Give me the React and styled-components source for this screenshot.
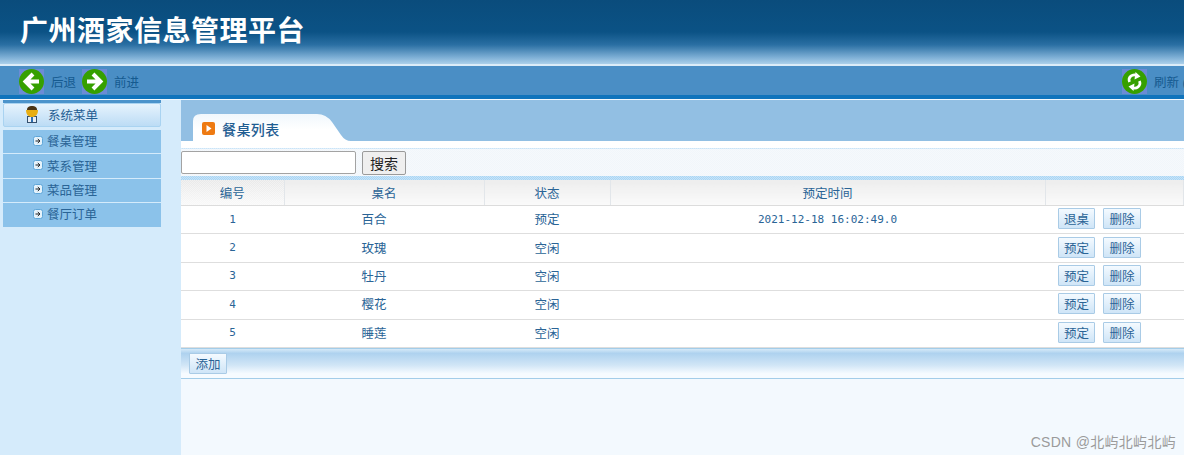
import styled, { createGlobalStyle } from "styled-components";

const GlobalStyle = createGlobalStyle`
  html, body { margin: 0; padding: 0; background: #f3f9fe; }
  body { font-family: "Liberation Sans", "Noto Sans CJK SC", sans-serif; }
`;

const dots = "repeating-conic-gradient(rgba(255,255,255,0.35) 0 25%, transparent 0 50%) 0 0 / 2px 2px";

const Page = styled.div`
  width: 1184px;
  height: 455px;
  overflow: hidden;
  position: relative;
  display: flex;
  flex-direction: column;
  color: #2a6496;
  font-size: 12.5px;
`;

const Banner = styled.header`
  height: 64px;
  flex: none;
  box-sizing: border-box;
  padding: 10px 0 0 20px;
  background: linear-gradient(#0a4c7c 0, #0b5285 50%, #2a6fa3 70%, #7fb0d6 90%, #acd0ea 100%);
`;

const Title = styled.h1`
  margin: 0;
  color: #fff;
  font: bold 28px/38px "Noto Sans CJK SC", sans-serif;
  letter-spacing: 0.5px;
`;

const ToolBar = styled.div`
  flex: none;
  height: 28px;
  padding: 1px 0 0 19px;
  border-top: 2px solid #dcecf8;
  border-bottom: 4px solid #1074bc;
  display: flex;
  align-items: center;
  background: #4a8ec5;
  color: #155a90;
`;

const ToolItem = styled.div`
  display: flex;
  align-items: center;
  gap: 7px;
  width: 63px;
  white-space: nowrap;
  &:last-child { margin-left: auto; width: 62px; }
`;

const ToolIcon = styled.svg`
  width: 25px;
  height: 25px;
  flex: none;
  background: #6c8bd6;
`;

const Body = styled.div`
  flex: 1;
  min-height: 0;
  display: grid;
  grid-template-columns: 181px 1fr;
  margin-top: 1px;
`;

const Sidebar = styled.aside`
  background: #d5ebfb;
  padding-left: 3px;
`;

const Menu = styled.nav`
  width: 158px;
  display: flex;
  flex-direction: column;
  gap: 1px;
  border-top: 3px solid #4b93cb;
`;

const MenuHead = styled.div`
  box-sizing: border-box;
  height: 24px;
  margin-bottom: 2px;
  padding: 0 0 1px 21px;
  display: flex;
  align-items: center;
  gap: 9px;
  border: 1px solid #a9d3f1;
  border-radius: 2px;
  background: linear-gradient(#e6f3fd, #bcdcf5);
  color: #1f5d92;
`;

const MenuItem = styled.a`
  box-sizing: border-box;
  height: 23.4px;
  padding: 0 0 2px 30px;
  display: flex;
  align-items: center;
  gap: 4px;
  background: #8bc2ea;
  color: #2a6496;
`;

const Content = styled.main`
  min-width: 0;
  background: #f3f9fe;
`;

const TabStrip = styled.div`
  height: 41px;
  background: #92bfe3;
  display: flex;
  align-items: flex-end;
  padding-left: 12px;
`;

const Tab = styled.div`
  width: 158px;
  height: 28px;
  box-sizing: border-box;
  display: flex;
  align-items: center;
  gap: 7px;
  padding: 3px 0 0 9px;
  background: linear-gradient(#f0f7fc, #fff 60%);
  clip-path: path("M0 28 L0 8 Q0 1 8 1 L124 1 Q133 1 139 9 L148 22 Q152 28 158 28 Z");
  color: #1f5d92;
  font-family: "Noto Sans CJK SC", sans-serif;
  font-size: 14px;
  font-weight: 500;
  letter-spacing: 0.4px;
`;

const SearchBar = styled.form`
  box-sizing: border-box;
  height: 39px;
  margin: 0;
  padding: 10px 0 0;
  display: flex;
  align-items: flex-start;
  gap: 6px;
  background: ${dots}, linear-gradient(#fff 7px, #c9e4f8 7px, #c9e4f8 8px, #f1f6fb 8px, #f1f6fb 35px, #a9d5f5 35px);
`;

const SearchInput = styled.input`
  box-sizing: border-box;
  width: 175px;
  height: 23px;
  border: 1px solid #a3a3a3;
  border-radius: 2px;
  background: #fff;
  padding: 0 4px;
`;

const SearchButton = styled.button`
  box-sizing: border-box;
  width: 44px;
  height: 24px;
  padding: 0;
  border: 1px solid #9a9a9a;
  border-radius: 2px;
  background: #efefef;
  color: #222;
  font: 14px "Noto Sans CJK SC", sans-serif;
`;

const Table = styled.table`
  width: 1003px;
  table-layout: fixed;
  border-collapse: collapse;
  background: #fff;
`;

const Head = styled.th`
  height: 25px;
  padding: 0;
  font-weight: 400;
  color: #2a6496;
  background: ${dots}, linear-gradient(#e9e9e9, #f9f9f9);
  border-right: 1px solid #e2e6ea;
  border-bottom: 1px solid #dcdcdc;
`;

const Cell = styled.td`
  height: 25.4px;
  padding: 0 ${(p) => p.$pull || 0}px 2px 0;
  text-align: center;
  border-bottom: 1px solid #dedede;
`;

const Mono = styled.span`
  font-family: "DejaVu Sans Mono", monospace;
  font-size: 11px;
`;

const Actions = styled.div`
  display: flex;
  gap: 8px;
  padding-left: 13px;
`;

const SmallButton = styled.button`
  box-sizing: border-box;
  width: ${(p) => p.$w || 37}px;
  height: 21px;
  padding: 0;
  border: 1px solid #a9cbe6;
  border-radius: 1px;
  background: linear-gradient(#f4faff, #cfe5f7);
  color: #2a6496;
  font: 12.5px "Noto Sans CJK SC", sans-serif;
`;

const BottomBar = styled.div`
  box-sizing: border-box;
  height: 31px;
  display: flex;
  align-items: center;
  padding-left: 8px;
  border-top: 1px solid #a3cde9;
  border-bottom: 1px solid #a3cde9;
  background: linear-gradient(#d5e9f8 0, #aed2ef 15%, #d0e5f6 55%, #f6fbff 85%);
`;

const Watermark = styled.div`
  position: absolute;
  right: 8px;
  bottom: 4px;
  color: #9b9b9b;
  font-size: 14px;
  letter-spacing: 0.3px;
`;

const Go = ({ back }) => (
  <ToolIcon viewBox="0 0 25 25">
    <circle cx="12.5" cy="12.5" r="12.5" fill="#36a000" />
    <path
      d={back ? "M14 5 L6.5 12.5 L14 20 M7.5 12.5 H20" : "M11 5 L18.5 12.5 L11 20 M17.5 12.5 H5"}
      fill="none"
      stroke="#fff"
      strokeWidth="4"
    />
  </ToolIcon>
);

const Refresh = () => (
  <ToolIcon viewBox="0 0 25 25">
    <circle cx="12.5" cy="12.5" r="12.5" fill="#36a000" />
    <path d="M7.5 13 C5.5 8 10.5 4.5 15 6.5" fill="none" stroke="#fff" strokeWidth="2.6" />
    <path d="M17.5 12 C19.5 17 14.5 20.5 10 18.5" fill="none" stroke="#fff" strokeWidth="2.6" />
    <path d="M13.5 3 L18.5 7.5 L12.5 10.5 Z M11.5 22 L6.5 17.5 L12.5 14.5 Z" fill="#fff" />
  </ToolIcon>
);

const User = () => (
  <svg width="14" height="17" viewBox="0 0 14 17">
    <rect x="2.5" y="10.5" width="9" height="6" fill="#e8eef5" stroke="#33506e" />
    <path d="M6 11 H8 V16 H6 Z" fill="#2f6fb0" />
    <path d="M1 4 H13 C13 9 10 11 7 11 C4 11 1 9 1 4 Z" fill="#e8ae12" />
    <path d="M2 4 C2 1 4 0 7 0 C10 0 12 1 12 4 Z" fill="#4b3414" />
  </svg>
);

const Bullet = () => (
  <svg width="10" height="10" viewBox="0 0 10 10">
    <rect x="0.5" y="0.5" width="9" height="9" rx="2" fill="#e4f2fb" stroke="#5fa6d8" />
    <path d="M2.5 5 H6 M4.8 3 L7 5 L4.8 7" fill="none" stroke="#222" />
  </svg>
);

const TabIcon = () => (
  <svg width="13" height="13" viewBox="0 0 13 13">
    <rect width="13" height="13" rx="2" fill="#ee7a12" />
    <path d="M4.5 3 L9.5 6.5 L4.5 10 Z" fill="#fff" />
  </svg>
);

const menus = ["餐桌管理", "菜系管理", "菜品管理", "餐厅订单"];

const rows = [
  { id: 1, name: "百合", state: "预定", time: "2021-12-18 16:02:49.0", action: "退桌" },
  { id: 2, name: "玫瑰", state: "空闲", action: "预定" },
  { id: 3, name: "牡丹", state: "空闲", action: "预定" },
  { id: 4, name: "樱花", state: "空闲", action: "预定" },
  { id: 5, name: "睡莲", state: "空闲", action: "预定" },
];

export default function App() {
  return (
    <Page>
      <GlobalStyle />
      <Banner>
        <Title>广州酒家信息管理平台</Title>
      </Banner>
      <ToolBar>
        <ToolItem><Go back />后退</ToolItem>
        <ToolItem><Go />前进</ToolItem>
        <ToolItem><Refresh />刷新 (</ToolItem>
      </ToolBar>
      <Body>
        <Sidebar>
          <Menu>
            <MenuHead><User />系统菜单</MenuHead>
            {menus.map((m) => (
              <MenuItem key={m}><Bullet />{m}</MenuItem>
            ))}
          </Menu>
        </Sidebar>
        <Content>
          <TabStrip>
            <Tab><TabIcon />餐桌列表</Tab>
          </TabStrip>
          <SearchBar>
            <SearchInput />
            <SearchButton type="button">搜索</SearchButton>
          </SearchBar>
          <Table>
            <colgroup>
              <col width="103" />
              <col width="200" />
              <col width="126" />
              <col width="435" />
              <col />
            </colgroup>
            <thead>
              <tr>
                <Head>编号</Head>
                <Head>桌名</Head>
                <Head>状态</Head>
                <Head>预定时间</Head>
                <Head />
              </tr>
            </thead>
            <tbody>
              {rows.map((r) => (
                <tr key={r.id}>
                  <Cell><Mono>{r.id}</Mono></Cell>
                  <Cell $pull={20}>{r.name}</Cell>
                  <Cell>{r.state}</Cell>
                  <Cell><Mono>{r.time}</Mono></Cell>
                  <Cell>
                    <Actions>
                      <SmallButton>{r.action}</SmallButton>
                      <SmallButton $w={38}>删除</SmallButton>
                    </Actions>
                  </Cell>
                </tr>
              ))}
            </tbody>
          </Table>
          <BottomBar>
            <SmallButton $w={38}>添加</SmallButton>
          </BottomBar>
        </Content>
      </Body>
      <Watermark>CSDN @北屿北屿北屿</Watermark>
    </Page>
  );
}
